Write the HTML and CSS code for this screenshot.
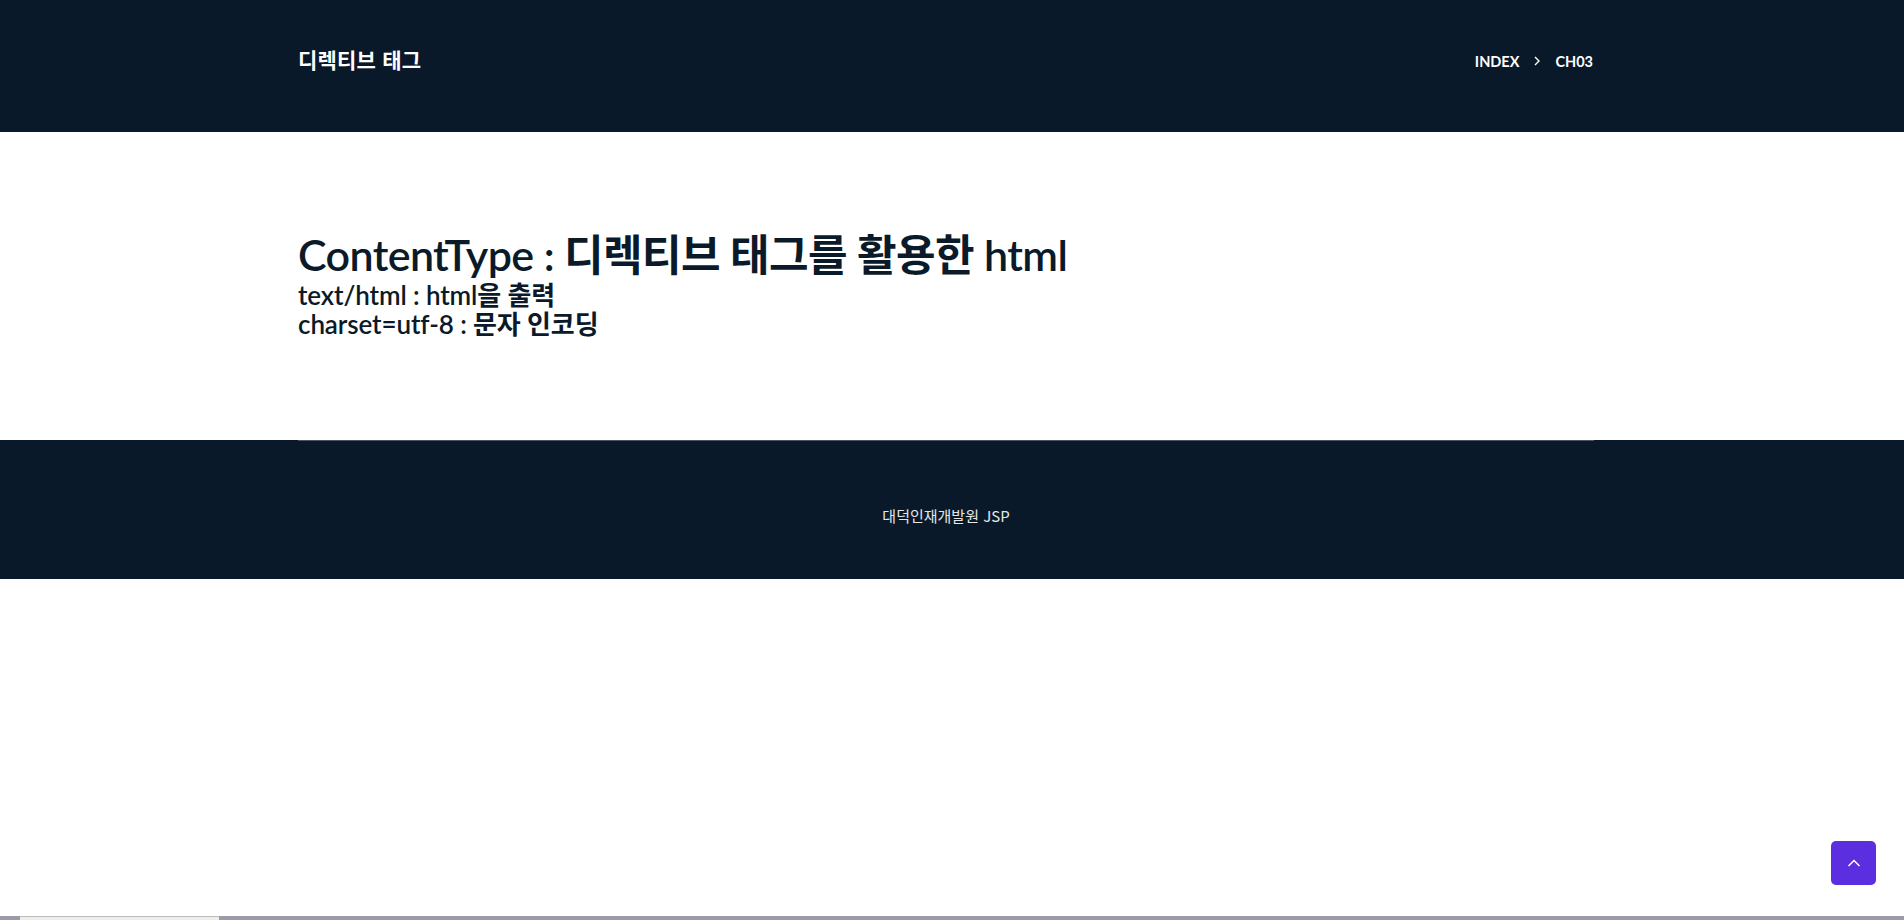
FILE: index.html
```html
<!DOCTYPE html>
<html lang="ko">
<head>
<meta charset="utf-8">
<title>디렉티브 태그</title>
<link rel="stylesheet" href="styles.css">
</head>
<body>
<header class="site-header">
  <div class="container header-inner">
    <div class="brand">디렉티브 태그</div>
    <nav class="crumbs">
      <span class="crumb">INDEX</span>
      <svg class="chev" width="8" height="12" viewBox="0 0 8 12"><path d="M2 2 L6 6 L2 10" fill="none" stroke="#ffffff" stroke-width="1.4"/></svg>
      <span class="crumb">CH03</span>
    </nav>
  </div>
</header>
<main class="content">
  <div class="container">
    <h1 class="title">ContentType : 디렉티브 태그를 활용한 html</h1>
    <p class="line">text/html : html을 출력</p>
    <p class="line">charset=utf-8 : 문자 인코딩</p>
  </div>
</main>
<footer class="site-footer">
  <div class="container footer-inner">
    <p class="copy">대덕인재개발원 JSP</p>
  </div>
</footer>
<a class="to-top" href="#">
  <svg width="14" height="10" viewBox="0 0 14 10"><path d="M1.5 8 L7 2.5 L12.5 8" fill="none" stroke="#ffffff" stroke-width="1.5"/></svg>
</a>
<div class="taskbar"><div class="taskbar-seg"></div></div>
</body>
</html>
```
FILE: styles.css
```css
* { box-sizing: border-box; }
html, body { margin: 0; padding: 0; }
body {
  background: #ffffff;
  font-family: "Lato", "Noto Sans CJK KR", sans-serif;
  color: #0b1a29;
}
.container {
  width: 1296px;
  margin-left: calc(50% - 654px);
}
.site-header {
  background: #0a1929;
  height: 132px;
}
.header-inner {
  height: 132px;
  display: flex;
  align-items: center;
  justify-content: space-between;
  padding-bottom: 10px;
}
.brand {
  color: #ffffff;
  font-family: "Noto Sans CJK KR", sans-serif;
  font-weight: 700;
  font-size: 21px;
  letter-spacing: 0.2px;
  margin-top: -5px;
}
.crumbs {
  display: flex;
  align-items: center;
  gap: 14px;
  margin-right: 1px;
}
.crumb {
  color: #ffffff;
  font-family: "Lato", sans-serif;
  font-weight: 700;
  font-size: 14.5px;
}
.content {
  padding-top: 97px;
  height: 308px;
}
.title {
  margin: 0;
  font-size: 43px;
  font-weight: 600;
  line-height: 52px;
  letter-spacing: -0.6px;
}
.line {
  margin: 0;
  font-size: 26px;
  font-weight: 600;
  line-height: 29px;
  letter-spacing: -0.1px;
}
.site-footer {
  background: #0a1929;
  height: 139px;
}
.footer-inner {
  border-top: 1px solid #4a5562;
  height: 139px;
  display: flex;
  align-items: center;
  justify-content: center;
  padding-top: 10px;
}
.copy {
  margin: 0;
  color: #e6e6e6;
  font-family: "Noto Sans CJK KR", sans-serif;
  font-size: 15px;
}
.to-top {
  position: fixed;
  left: 1831px;
  top: 841px;
  width: 45px;
  height: 44px;
  background: #5b2fe0;
  border-radius: 5px;
  display: flex;
  align-items: center;
  justify-content: center;
}
.taskbar {
  position: fixed;
  left: 0;
  bottom: 0;
  width: 100%;
  height: 4px;
  background: #9a9aa8;
}
.taskbar-seg {
  margin-left: 20px;
  width: 199px;
  height: 4px;
  background: #eeeeee;
  border-top: 1px solid #bdbdbd;
}
```
